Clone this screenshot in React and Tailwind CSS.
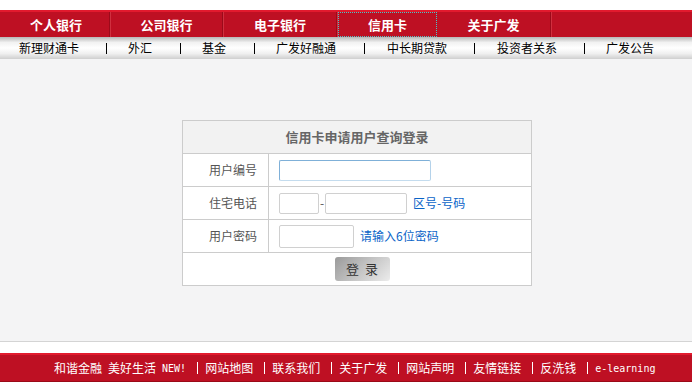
import React from "react";

const F = { fontFamily: '"Noto Sans CJK SC", "Noto Sans", sans-serif' };

function NavSep() {
  return (
    <div className="flex h-full">
      <div className="w-px h-full bg-[#9c0a1a]" />
      <div className="w-px h-full bg-[#d0303f]" />
    </div>
  );
}

function SubSep() {
  return <div className="w-px h-[11px] bg-black" />;
}

function FootSep() {
  return <div className="w-px h-[12px] bg-white ml-[11px] mr-[7px]" />;
}

export default function App() {
  return (
    <div className="w-[692px] h-[382px] flex flex-col bg-white overflow-hidden" style={F}>
      <div className="h-[10px] bg-white" />
      {/* top nav */}
      <div className="h-[27px] flex items-stretch bg-[#be1023] border-t-2 border-[#e21a2e] text-white font-bold text-[13px]">
        <div className="w-[109px] flex items-center justify-center pl-[3px]">个人银行</div>
        <NavSep />
        <div className="w-[111px] flex items-center justify-center">公司银行</div>
        <NavSep />
        <div className="w-[112px] flex items-center justify-center">电子银行</div>
        <NavSep />
        <div className="w-[99px] flex items-center justify-center border border-dotted border-[#4fc4c8]">信用卡</div>
        <div className="w-[113px] flex items-center justify-center">关于广发</div>
        <NavSep />
        <div className="flex-1" />
      </div>
      {/* sub nav */}
      <div className="h-[22px] flex items-center text-[12px] text-black bg-[linear-gradient(#b8b8b8,#f2f2f2_25%,#ffffff_50%,#f0f0f0_75%,#cfcfcf)]">
        <div className="w-[106px] pr-[8px] text-center">新理财通卡</div>
        <SubSep />
        <div className="w-[73px] pr-[7px] text-center">外汇</div>
        <SubSep />
        <div className="w-[73px] pr-[7px] text-center">基金</div>
        <SubSep />
        <div className="w-[109px] pr-[7px] text-center">广发好融通</div>
        <SubSep />
        <div className="w-[109px] pr-[5px] text-center">中长期贷款</div>
        <SubSep />
        <div className="w-[109px] pr-[5px] text-center">投资者关系</div>
        <SubSep />
        <div className="w-[107px] pr-[17px] text-center">广发公告</div>
      </div>
      {/* main */}
      <div className="flex-1 bg-[#f4f4f5] border-b border-[#d4d4d4] pt-[61px] pl-[182px]">
        <div className="w-[350px] border border-[#cccccc] bg-white">
          <div className="h-[33px] bg-[#f2f2f2] border-b border-[#cccccc] flex items-center justify-center text-[13px] font-bold text-[#666666]">
            信用卡申请用户查询登录
          </div>
          <div className="h-[33px] flex border-b border-[#cccccc]">
            <div className="w-[86px] border-r border-[#cccccc] flex items-center justify-end pr-[11px] text-[12px] text-[#555555]">用户编号</div>
            <div className="flex items-center pl-[10px]">
              <div className="w-[152px] h-[21px] border border-[#7fb0d8] border-b-[#c4dcee] border-r-[#b4d2ea] rounded-[2px] bg-white" />
            </div>
          </div>
          <div className="h-[33px] flex border-b border-[#cccccc]">
            <div className="w-[86px] border-r border-[#cccccc] flex items-center justify-end pr-[11px] text-[12px] text-[#555555]">住宅电话</div>
            <div className="flex items-center pl-[10px]">
              <div className="w-[40px] h-[21px] border border-[#d0d0d0] rounded-[2px] bg-white" />
              <span className="text-[12px] text-[#555555] w-[6px] text-center leading-none">-</span>
              <div className="w-[82px] h-[21px] border border-[#d0d0d0] rounded-[2px] bg-white" />
              <span className="ml-[6px] text-[12px] text-[#0a64c8]">区号-号码</span>
            </div>
          </div>
          <div className="h-[33px] flex border-b border-[#cccccc]">
            <div className="w-[86px] border-r border-[#cccccc] flex items-center justify-end pr-[11px] text-[12px] text-[#555555]">用户密码</div>
            <div className="flex items-center pl-[10px]">
              <div className="w-[75px] h-[23px] border border-[#d0d0d0] rounded-[2px] bg-white" />
              <span className="ml-[6px] text-[12px] text-[#0a64c8]">请输入6位密码</span>
            </div>
          </div>
          <div className="h-[32px] flex items-center justify-center">
            <div className="ml-[10px] w-[55px] h-[24px] rounded-[3px] bg-[linear-gradient(135deg,#9a9a9a,#c8c8c8_55%,#ececec)] flex items-center justify-center text-[13px] text-[#333333] tracking-[6px] pl-[6px]">
              登录
            </div>
          </div>
        </div>
      </div>
      <div className="h-[11px] bg-white" />
      {/* footer */}
      <div className="h-[29px] bg-[#be1023] border-t-2 border-[#e21a2e] border-b border-b-[#9a0a18] flex items-center pl-[54px] text-white text-[12px]">
        <span>和谐金融</span>
        <span className="ml-[6px]">美好生活</span>
        <span className="ml-[6px] text-[10px]" style={{ fontFamily: '"DejaVu Sans Mono", monospace' }}>NEW!</span>
        <FootSep />
        <span>网站地图</span>
        <FootSep />
        <span>联系我们</span>
        <FootSep />
        <span>关于广发</span>
        <FootSep />
        <span>网站声明</span>
        <FootSep />
        <span>友情链接</span>
        <FootSep />
        <span>反洗钱</span>
        <FootSep />
        <span className="text-[10px]" style={{ fontFamily: '"DejaVu Sans Mono", monospace' }}>e-learning</span>
      </div>
    </div>
  );
}
